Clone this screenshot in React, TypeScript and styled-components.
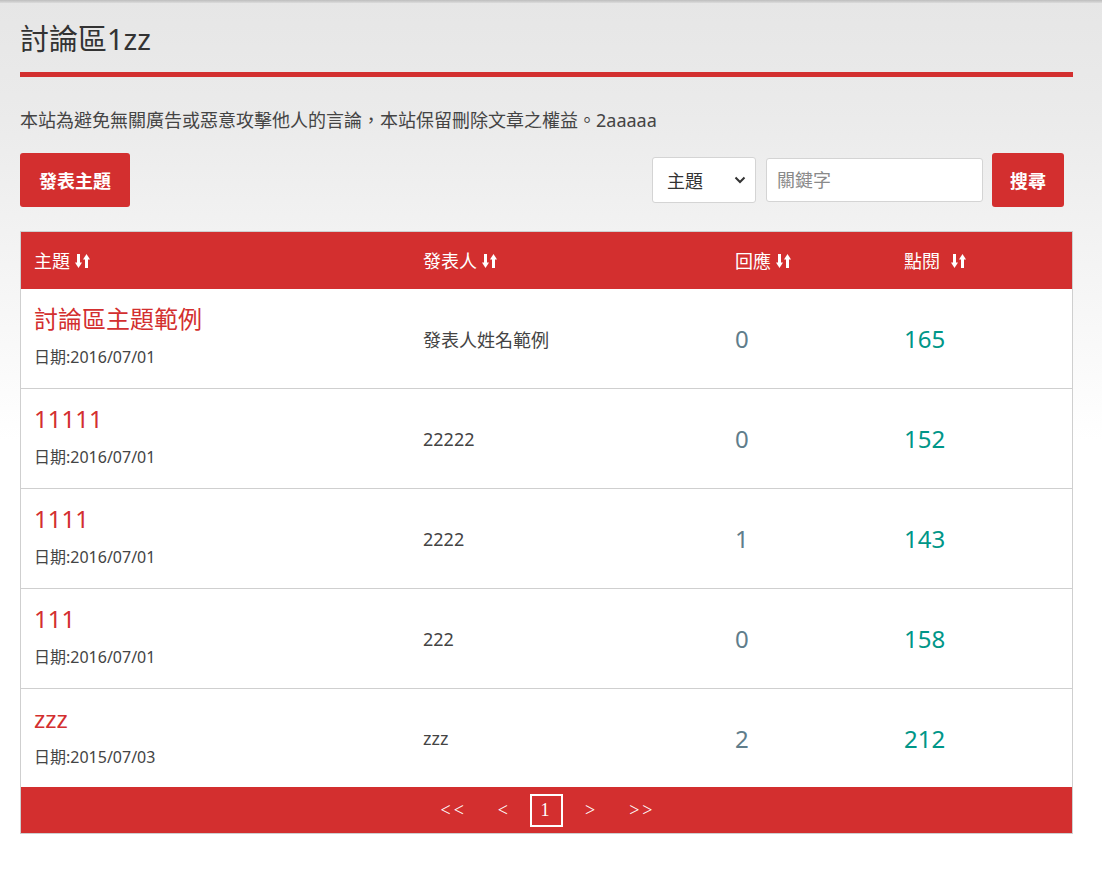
import React from "react";
import styled, { createGlobalStyle } from "styled-components";

const RED = "#d32f2f";
const FONT = `"Noto Sans", "Noto Sans CJK TC", sans-serif`;

const Global = createGlobalStyle`
  html, body { margin: 0; padding: 0; }
  body {
    font-family: ${FONT};
    color: #333;
    background: linear-gradient(#e6e6e6 0px, #ebebeb 120px, #ffffff 440px) no-repeat, #fff;
    min-height: 876px;
  }
  * { box-sizing: border-box; }
`;

const TopBar = styled.div`
  height: 3px;
  background: linear-gradient(#bdbdbd, #dcdcdc);
`;

const Page = styled.div`
  width: 1053px;
  margin-left: 20px;
  padding-bottom: 40px;
`;

const Title = styled.h1`
  margin: 18px 0 0;
  font-size: 29px;
  font-weight: 400;
  line-height: 36px;
  color: #333;
`;

const RedRule = styled.div`
  height: 5px;
  background: ${RED};
  margin-top: 15px;
`;

const Notice = styled.p`
  margin: 31px 0 0;
  font-size: 18px;
  line-height: 24px;
  color: #444;
`;

const Toolbar = styled.div`
  display: flex;
  align-items: center;
  margin-top: 21px;
  padding-right: 9px;
`;

const RedButton = styled.button<{ $pad?: number }>`
  height: 54px;
  padding: 0 ${(p) => p.$pad ?? 18}px;
  border: none;
  border-radius: 3px;
  background: ${RED};
  color: #fff;
  font-family: ${FONT};
  font-size: 18px;
  font-weight: 700;
  cursor: pointer;
`;

const SearchGroup = styled.div`
  margin-left: auto;
  display: flex;
  align-items: center;
`;

const SelectBox = styled.div`
  width: 104px;
  height: 46px;
  display: flex;
  align-items: center;
  justify-content: space-between;
  padding: 0 9px 0 14px;
  background: #fff;
  border: 1px solid #d4d4d4;
  border-radius: 3px;
  font-size: 18px;
  color: #333;
`;

const KeywordInput = styled.input`
  width: 217px;
  height: 44px;
  margin-left: 10px;
  padding: 0 10px;
  border: 1px solid #d4d4d4;
  border-radius: 3px;
  background: #fff;
  font-family: ${FONT};
  font-size: 18px;
  color: #333;
  &::placeholder { color: #8a8a8a; }
`;

const SearchBtnWrap = styled.div`
  margin-left: 9px;
`;

const Table = styled.div`
  margin-top: 24px;
  border: 1px solid #cfcfcf;
  background: #fff;
`;

const COLS = "389px 312px 169px 1fr";

const HeadRow = styled.div`
  display: grid;
  grid-template-columns: ${COLS};
  height: 57px;
  align-items: center;
  background: ${RED};
  color: #fff;
  font-size: 18px;
`;

const HeadCell = styled.div<{ $gap?: number }>`
  padding-left: 13px;
  display: flex;
  align-items: center;
  gap: ${(p) => p.$gap ?? 5}px;
  line-height: 22px;
`;

const Row = styled.div<{ $last?: boolean }>`
  display: grid;
  grid-template-columns: ${COLS};
  height: ${(p) => (p.$last ? 98 : 100)}px;
  align-items: center;
  border-bottom: ${(p) => (p.$last ? "none" : "1px solid #cfcfcf")};
`;

const TopicCell = styled.div`
  padding: 0 13px 5px;
  display: flex;
  flex-direction: column;
  gap: 12px;
`;

const TopicTitle = styled.a`
  font-size: 24px;
  line-height: 30px;
  color: ${RED};
  text-decoration: none;
`;

const DateText = styled.div`
  font-size: 16px;
  line-height: 22px;
  color: #444;
`;

const AuthorCell = styled.div`
  padding-left: 13px;
  font-size: 18px;
  color: #444;
`;

const NumberCell = styled.div<{ $color: string }>`
  padding-left: 13px;
  font-size: 24px;
  color: ${(p) => p.$color};
`;

const Pager = styled.div`
  height: 46px;
  background: ${RED};
  display: flex;
  align-items: center;
  justify-content: center;
  gap: 10px;
`;

const PageLink = styled.span<{ $active?: boolean }>`
  height: 33px;
  min-width: 33px;
  padding: 0 ${(p) => (p.$active ? 0 : 12)}px;
  display: flex;
  align-items: center;
  justify-content: center;
  color: #fff;
  font-family: "Liberation Serif", serif;
  font-size: 18px;
  letter-spacing: 3px;
  border: ${(p) => (p.$active ? "2px solid #fff" : "none")};
  cursor: pointer;
  & > span { margin-right: -3px; }
`;

const SortIcon = () => (
  <svg width="15" height="16" viewBox="0 0 15 16" aria-hidden>
    <rect x="2" y="1" width="3" height="10" fill="#fff" />
    <polygon points="0,9.5 7,9.5 3.5,15" fill="#fff" />
    <rect x="10" y="5" width="3" height="10" fill="#fff" />
    <polygon points="8,6.5 15,6.5 11.5,1" fill="#fff" />
  </svg>
);

const Chevron = () => (
  <svg width="12" height="8" viewBox="0 0 12 8" aria-hidden>
    <polyline points="1.5,1.5 6,6 10.5,1.5" fill="none" stroke="#333" strokeWidth="2" />
  </svg>
);

const rows = [
  { title: "討論區主題範例", date: "2016/07/01", author: "發表人姓名範例", replies: 0, views: 165 },
  { title: "11111", date: "2016/07/01", author: "22222", replies: 0, views: 152 },
  { title: "1111", date: "2016/07/01", author: "2222", replies: 1, views: 143 },
  { title: "111", date: "2016/07/01", author: "222", replies: 0, views: 158 },
  { title: "zzz", date: "2015/07/03", author: "zzz", replies: 2, views: 212 },
];

export default function App() {
  return (
    <>
      <Global />
      <TopBar />
      <Page>
        <Title>討論區1zz</Title>
        <RedRule />
        <Notice>本站為避免無關廣告或惡意攻擊他人的言論，本站保留刪除文章之權益。2aaaaa</Notice>
        <Toolbar>
          <RedButton $pad={19}>發表主題</RedButton>
          <SearchGroup>
            <SelectBox>
              <span>主題</span>
              <Chevron />
            </SelectBox>
            <KeywordInput placeholder="關鍵字" />
            <SearchBtnWrap>
              <RedButton $pad={18}>搜尋</RedButton>
            </SearchBtnWrap>
          </SearchGroup>
        </Toolbar>
        <Table>
          <HeadRow>
            <HeadCell>主題 <SortIcon /></HeadCell>
            <HeadCell>發表人 <SortIcon /></HeadCell>
            <HeadCell>回應 <SortIcon /></HeadCell>
            <HeadCell $gap={11}>點閱 <SortIcon /></HeadCell>
          </HeadRow>
          {rows.map((r, i) => (
            <Row key={i} $last={i === rows.length - 1}>
              <TopicCell>
                <TopicTitle href="#">{r.title}</TopicTitle>
                <DateText>日期:{r.date}</DateText>
              </TopicCell>
              <AuthorCell>{r.author}</AuthorCell>
              <NumberCell $color="#607d8b">{r.replies}</NumberCell>
              <NumberCell $color="#009688">{r.views}</NumberCell>
            </Row>
          ))}
          <Pager>
            <PageLink><span>&lt;&lt;</span></PageLink>
            <PageLink><span>&lt;</span></PageLink>
            <PageLink $active>1</PageLink>
            <PageLink><span>&gt;</span></PageLink>
            <PageLink><span>&gt;&gt;</span></PageLink>
          </Pager>
        </Table>
      </Page>
    </>
  );
}
